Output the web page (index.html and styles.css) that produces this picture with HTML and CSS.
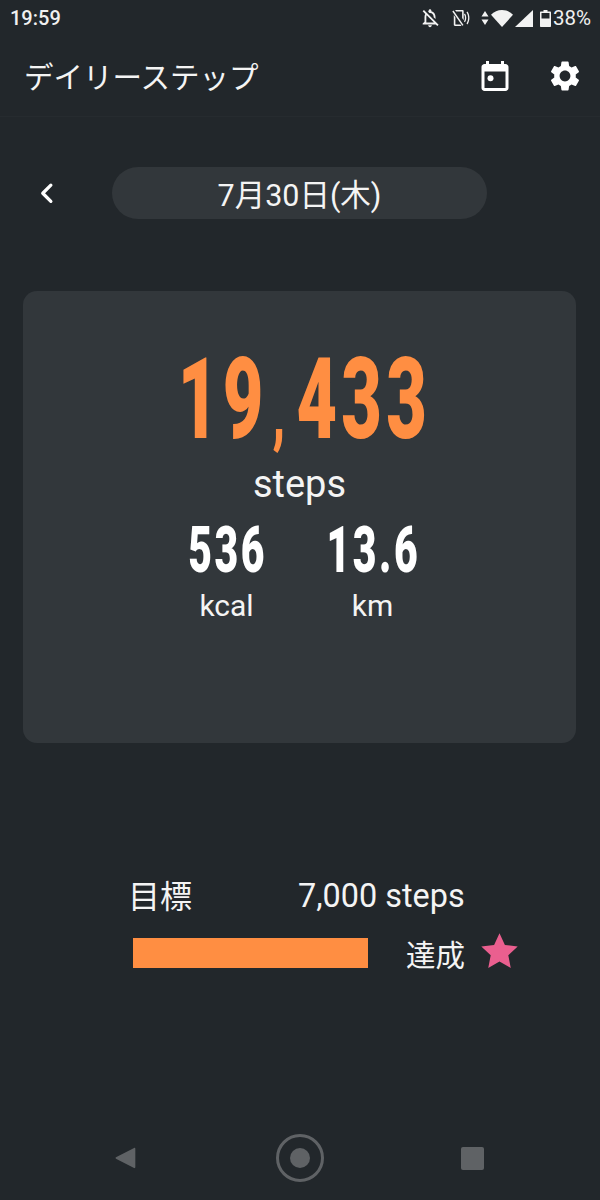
FILE: index.html
```html
<!DOCTYPE html>
<html lang="ja">
<head>
<meta charset="utf-8">
<title>デイリーステップ</title>
<link rel="stylesheet" href="styles.css">
</head>
<body>
<div class="phone">
  <div class="status">
    <span class="clock">19:59</span>
    <div class="status-icons">
      <svg class="si bell" viewBox="0 0 24 24"><path d="M12 22c1.1 0 2-.9 2-2h-4c0 1.1.9 2 2 2zm0-15.5c2.49 0 4 2.02 4 4.5v.1l2 2V11c0-3.07-1.63-5.64-4.5-6.32V4c0-.83-.67-1.5-1.5-1.5s-1.5.67-1.5 1.5v.68c-.24.06-.47.15-.69.23l1.64 1.64c.18-.02.37-.05.55-.05zM5.41 3.35L4 4.76l2.81 2.81C6.29 8.57 6 9.74 6 11v5l-2 2v1h14.24l1.74 1.74 1.41-1.41L5.41 3.35zM16 17H8v-6c0-.68.12-1.32.34-1.9L16 16.76V17z"/></svg>
      <svg class="si vib" viewBox="0 0 20 20"><path d="M2.5 2.6 12.5 17l-1.2.8L1.3 3.4zM4 2h7.5c.7 0 1.2.5 1.2 1.2v9l-1.6-2.3V3.6H5.2zM2.8 7l1.6 2.3v7.1h5l1.1 1.6H4c-.7 0-1.2-.5-1.2-1.2zM14 5.5c1.7 2.6 1.7 6.200 0 8.800l-1-.8c1.300-2.100 1.300-5.100 0-7.200zM16.500 3.500c2.600 3.800 2.600 9.100 0 12.900l-1-.8c2.200-3.400 2.200-7.900 0-11.300z"/></svg>
      <svg class="si arrows" viewBox="0 0 8 14"><path d="M4 0 7.500 5.500H.5zM4 14 .5 8.500h7z"/></svg>
      <svg class="si wifi" viewBox="0 0 22 17"><path d="M11 17 0 4.800C3 1.800 6.800 0 11 0s8 1.800 11 4.800z"/></svg>
      <svg class="si signal" viewBox="0 0 18 17"><path d="M18 0v17H0z"/></svg>
      <svg class="si batt" viewBox="0 0 11 17"><path d="M3.500 0h4v1.500H10c.6 0 1 .4 1 1V16c0 .6-.4 1-1 1H1c-.6 0-1-.4-1-1V2.500c0-.6.4-1 1-1h2.500zM1.500 3v5.500h8V3z"/></svg>
      <span class="pct">38%</span>
    </div>
  </div>

  <header class="appbar">
    <h1 class="title">デイリーステップ</h1>
    <div class="actions">
      <svg class="action" viewBox="0 0 24 24"><path d="M19 4h-1V2h-2v2H8V2H6v2H5c-1.100 0-2 .9-2 2v14c0 1.100.9 2 2 2h14c1.100 0 2-.9 2-2V6c0-1.100-.9-2-2-2zm0 16H5V9h14v11z"/><circle cx="9" cy="13.500" r="2"/></svg>
      <svg class="action" viewBox="0 0 24 24"><path d="M19.140 12.940c.04-.3.06-.61.06-.94 0-.32-.02-.64-.07-.94l2.030-1.580c.18-.14.23-.41.12-.61l-1.920-3.320c-.12-.22-.37-.29-.59-.22l-2.390.96c-.5-.38-1.030-.7-1.620-.94l-.36-2.540c-.04-.24-.24-.41-.48-.41h-3.840c-.24 0-.43.17-.47.41l-.36 2.540c-.59.24-1.130.57-1.620.94l-2.390-.96c-.22-.08-.47 0-.59.22L2.740 8.870c-.12.21-.08.47.12.61l2.030 1.580c-.05.3-.09.63-.09.94s.02.64.07.94l-2.030 1.580c-.18.14-.23.41-.12.61l1.920 3.320c.12.22.37.29.59.22l2.390-.96c.5.38 1.030.7 1.620.94l.36 2.540c.05.24.24.41.48.41h3.840c.24 0 .44-.17.47-.41l.36-2.540c.59-.24 1.130-.56 1.620-.94l2.390.96c.22.08.47 0 .59-.22l1.920-3.320c.12-.22.07-.47-.12-.61l-2.010-1.580zM12 15.600c-1.980 0-3.600-1.620-3.600-3.600s1.620-3.600 3.600-3.600 3.600 1.620 3.600 3.600-1.620 3.600-3.600 3.600z"/></svg>
    </div>
  </header>

  <div class="date-row">
    <svg class="back" viewBox="0 0 12 18"><path d="M9.500 2.500 3 9l6.500 6.500"/></svg>
    <div class="date-pill">7月30日(木)</div>
  </div>

  <section class="card">
    <div class="steps-num">19<span class="comma">,</span>433</div>
    <div class="steps-label">steps</div>
    <div class="stats">
      <div class="stat">
        <div class="stat-num">536</div>
        <div class="stat-label">kcal</div>
      </div>
      <div class="stat">
        <div class="stat-num">13.6</div>
        <div class="stat-label">km</div>
      </div>
    </div>
  </section>

  <section class="goal">
    <div class="goal-top">
      <span class="goal-name">目標</span>
      <span class="goal-val">7,000 steps</span>
    </div>
    <div class="goal-bottom">
      <div class="bar"></div>
      <span class="done">達成</span>
      <svg class="star" viewBox="0 0 24 24"><path d="M12 .8l3.500 7.600 8.300 1-6.100 5.700 1.600 8.200L12 19.200l-7.300 4.100 1.600-8.200L.2 9.400l8.300-1z"/></svg>
    </div>
  </section>

  <nav class="navbar">
    <svg class="nav-back" viewBox="0 0 22 24"><path d="M20 1.500c.6-.4 1.300 0 1.300.7v19.600c0 .7-.7 1.100-1.300.7L1 12.700c-.5-.3-.5-1.100 0-1.400z"/></svg>
    <div class="nav-home"><div class="nav-dot"></div></div>
    <div class="nav-square"></div>
  </nav>
</div>
</body>
</html>
```
FILE: styles.css
```css
* { box-sizing: border-box; }
html, body { margin: 0; padding: 0; }
body {
  background: #22272b;
  color: #fff;
  font-family: Roboto, "Noto Sans CJK JP", sans-serif;
}
.phone {
  width: 600px;
  height: 1200px;
  display: flex;
  flex-direction: column;
  overflow: hidden;
}
.status {
  height: 36px;
  display: flex;
  align-items: center;
  justify-content: space-between;
  padding: 0 9px 0 10px;
}
.clock { font-size: 20px; font-weight: 500; color: #f0f0f0; }
.status-icons { display: flex; align-items: center; }
.si { fill: #f2f2f2; display: block; }
.bell { width: 22px; height: 22px; margin-right: 10px; }
.vib { width: 20px; height: 20px; margin-right: 10px; }
.arrows { width: 8px; height: 14px; margin-right: 2px; }
.wifi { width: 22px; height: 17px; margin-right: 2px; }
.signal { width: 18px; height: 17px; margin-right: 7px; }
.batt { width: 11px; height: 17px; margin-right: 2px; }
.pct { font-size: 20.500px; color: #f0f0f0; }

.appbar {
  height: 81px;
  display: flex;
  align-items: center;
  justify-content: space-between;
  padding: 0 17px 0 24px;
  border-bottom: 1px solid #262b2f;
}
.title { margin: 0 0 2px; font-size: 29.500px; font-weight: 400; color: #f4f4f4; }
.actions { display: flex; gap: 34px; }
.action { width: 36px; height: 36px; fill: #fff; display: block; }

.date-row {
  display: flex;
  align-items: center;
  margin-top: 50px;
  padding-left: 39px;
}
.back {
  width: 15px;
  height: 22.500px;
  fill: none;
  stroke: #fff;
  stroke-width: 2.600;
  stroke-linecap: round;
  stroke-linejoin: round;
  margin-right: 58px;
}
.date-pill {
  width: 375px;
  height: 52px;
  border-radius: 26px;
  background: #32373b;
  display: flex;
  align-items: center;
  justify-content: center;
  font-size: 30.500px;
  color: #f4f4f4;
}

.card {
  margin: 72px 24px 0 23px;
  height: 452px;
  border-radius: 14px;
  background: #32373b;
  display: flex;
  flex-direction: column;
  align-items: center;
  padding-top: 50px;
}
.steps-num {
  font-weight: 900;
  font-size: 113px;
  line-height: 118px;
  letter-spacing: 7px;
  margin-left: 10px;
  color: #ff8e42;
  white-space: nowrap;
  transform: scaleX(0.62);
}
.comma { font-size: 76px; line-height: 0; letter-spacing: 18px; margin-left: 8px; }
.steps-label { font-size: 38px; line-height: 44px; margin-top: 3px; color: #f4f4f4; }
.stats { display: flex; margin-top: 12px; }
.stat { width: 146px; display: flex; flex-direction: column; align-items: center; }
.stat-num {
  font-weight: 900;
  font-size: 64px;
  line-height: 66px;
  letter-spacing: 4px;
  margin-left: 2px;
  white-space: nowrap;
  color: #fff;
  transform: scaleX(0.64);
}
.stat-label { font-size: 30px; line-height: 36px; margin-top: 4px; color: #f4f4f4; }

.goal {
  margin: 131px 0 0 128px;
  width: 390px;
}
.goal-top { display: flex; align-items: center; height: 44px; }
.goal-name { font-size: 32px; width: 170px; margin-bottom: 5px; color: #f4f4f4; }
.goal-val { font-size: 32.400px; color: #f4f4f4; }
.goal-bottom { display: flex; align-items: center; margin-top: 17px; height: 36px; }
.bar { width: 235px; height: 30px; margin-left: 5px; background: #ff8e42; }
.done { font-size: 29.500px; margin-left: 38px; color: #f4f4f4; }
.star { width: 37px; height: 37px; margin: 0 0 6px 16px; fill: #ea5f8f; }

.navbar {
  margin-top: auto;
  height: 84px;
  display: flex;
  align-items: center;
  padding-left: 115px;
}
.nav-back { width: 21px; height: 24px; margin-right: 140px; fill: #5f6265; }
.nav-home {
  width: 48px;
  height: 48px;
  margin-right: 137px;
  border-radius: 50%;
  border: 3px solid #5f6265;
  display: flex;
  align-items: center;
  justify-content: center;
}
.nav-dot { width: 20px; height: 20px; border-radius: 50%; background: #5f6265; }
.nav-square { width: 23px; height: 23px; border-radius: 2px; background: #5f6265; }
```
